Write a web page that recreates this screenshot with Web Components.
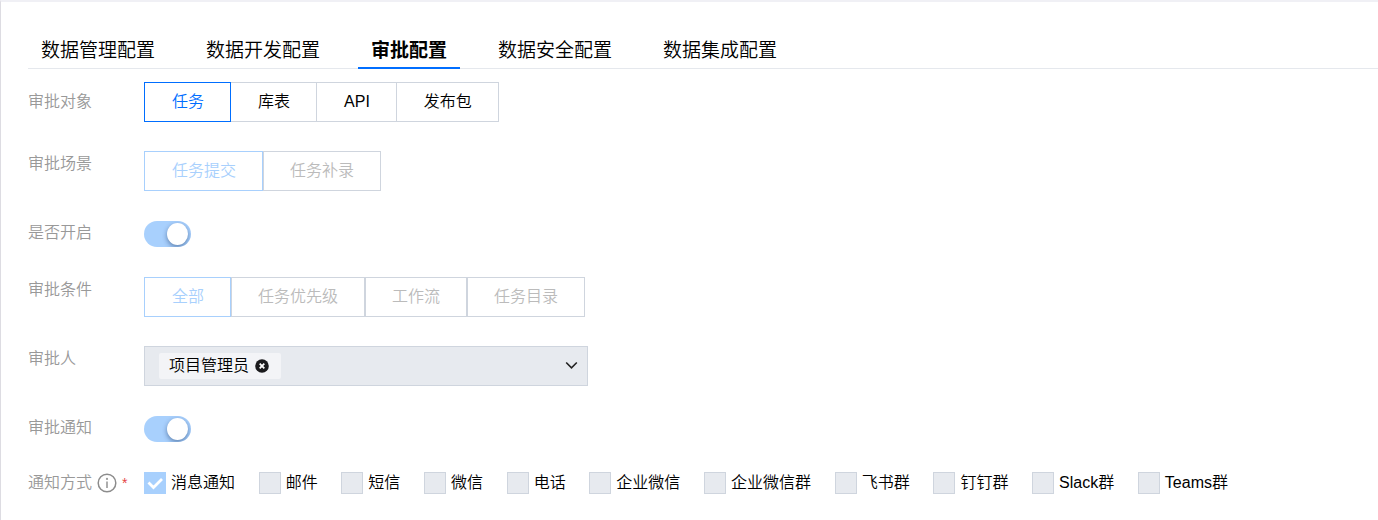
<!DOCTYPE html>
<html lang="zh-CN">
<head>
<meta charset="utf-8">
<meta name="viewport" content="width=device-width, initial-scale=1">
<title>审批配置</title>
<style>
  :root {
    --blue: #006eff;
    --blue-off: #a8d0fd;
    --line: #cfd5de;
    --fill-off: #e7eaef;
    --text-off: #bbb;
    --label: #999;
  }
  body {
    margin: 0;
    background: #fff;
    color: #000;
    font: 16px/24px "Liberation Sans", "Noto Sans CJK SC", sans-serif;
    font-weight: 350;
  }
</style>
</head>
<body>
<config-page></config-page>

<script>
const define = (name, html, setup, statics = {}) => {
  const template = document.createElement('template');
  template.innerHTML = html;
  const cls = class extends HTMLElement {
    constructor() {
      super();
      this.attachShadow({ mode: 'open', delegatesFocus: !!statics.formAssociated });
      this.shadowRoot.append(template.content.cloneNode(true));
    }
    connectedCallback() {
      if (setup) setup(this, this.shadowRoot);
    }
  };
  Object.assign(cls, statics);
  customElements.define(name, cls);
};

define('config-tab', `
  <style>
    :host { display: block; }
    button {
      display: block; margin: 0; padding: 0 13px; border: 0; background: none;
      border-bottom: 2px solid transparent;
      font: inherit; font-size: 19px; line-height: 32px; color: #000; cursor: pointer;
      white-space: nowrap;
    }
    :host([active]) button { font-weight: 700; border-color: var(--blue); }
  </style>
  <button type="button" role="tab"><slot></slot></button>`,
  (el, root) => root.querySelector('button').setAttribute('aria-selected', el.hasAttribute('active')));

define('tab-bar', `
  <style>
    :host { display: block; box-shadow: inset 0 -1px #e5e8ed; }
    nav { display: flex; gap: 25px; }
  </style>
  <nav role="tablist"><slot></slot></nav>`);

define('form-row', `
  <style>
    :host { display: flex; align-items: flex-start; }
    .label {
      flex: 0 0 116px; display: flex; align-items: center;
      color: var(--label); line-height: 26px;
    }
    :host([middle]) { align-items: center; }
    :host([middle]) .label { line-height: 22px; }
    .control { flex: 1; min-width: 0; }
  </style>
  <div class="label"><slot name="label"></slot></div>
  <div class="control"><slot></slot></div>`);

define('segment-group', `
  <style>
    :host { display: flex; }
  </style>
  <slot></slot>`, el => el.setAttribute('role', 'group'));

define('segment-item', `
  <style>
    :host { display: block; margin-left: -1px; }
    :host(:first-child) { margin-left: 0; }
    :host([active]) { z-index: 1; position: relative; }
    button {
      display: block; box-sizing: border-box; height: 40px; margin: 0;
      padding: 0 26px 0 27px; border: 1px solid var(--line); background: #fff;
      font: inherit; line-height: 38px; color: #000; white-space: nowrap;
    }
    :host([active]) button { border-color: var(--blue); color: var(--blue); }
    :host([disabled]) { margin-left: 0; }
    :host([disabled]) button { padding-left: 26px; color: var(--text-off); }
    :host([disabled]:first-child) button { padding-left: 27px; }
    :host([disabled][active]) button { border-color: var(--blue-off); color: var(--blue-off); }
  </style>
  <button type="button"><slot></slot></button>`,
  (el, root) => {
    const b = root.querySelector('button');
    b.disabled = el.hasAttribute('disabled');
    b.setAttribute('aria-pressed', el.hasAttribute('active'));
  });

define('toggle-switch', `
  <style>
    :host { display: flex; align-items: center; height: 28px; }
    input {
      appearance: none; margin: 0; width: 47px; height: 26px; border-radius: 13px;
      background: var(--blue-off); display: flex; align-items: center;
      justify-content: flex-end; padding: 0 3px; box-sizing: border-box; overflow: hidden;
    }
    input::before {
      content: ""; width: 21px; height: 22px; border-radius: 50%; background: #fff;
      box-shadow: 0 2px 5px rgba(0, 30, 80, .45);
    }
  </style>
  <input type="checkbox" role="switch" checked disabled>`,
  (el, root) => root.querySelector('input').setAttribute('aria-label', el.getAttribute('label')),
  { formAssociated: true });

define('tag-select', `
  <style>
    :host {
      display: flex; align-items: center; box-sizing: border-box; position: relative;
      max-width: 444px; height: 40px; padding: 0 0 0 14px;
      border: 1px solid var(--line); background: var(--fill-off);
    }
    .tag {
      display: flex; align-items: center; gap: 6px; height: 26px; padding: 0 12px 0 10px;
      border-radius: 2px; background: #f3f4f7; white-space: nowrap;
    }
    .tag button { display: flex; margin: 0; padding: 0; border: 0; background: none; }
    select {
      appearance: none; flex: 1; min-width: 0; height: 38px; border: 0; margin: 0;
      background: none; opacity: 1;
    }
    .arrow { position: absolute; right: 9px; top: 12px; pointer-events: none; }
  </style>
  <span class="tag"><slot></slot>
    <button type="button" aria-label="移除" disabled>
      <svg width="14" height="14" viewBox="0 0 14 14"><circle cx="7" cy="7" r="6.800" fill="#1b1b1d"/><path d="M4.700 4.700l4.600 4.600M9.300 4.700L4.700 9.300" stroke="#fff" stroke-width="1.800"/></svg>
    </button>
  </span>
  <select disabled><option value=""></option></select>
  <svg class="arrow" width="14" height="14" viewBox="0 0 14 14"><path d="M2.200 3.500L7.500 8.800 12.800 3.500" fill="none" stroke="#222" stroke-width="1.600"/></svg>`,
  (el, root) => root.querySelector('select').setAttribute('aria-label', el.getAttribute('label')),
  { formAssociated: true });

define('check-option', `
  <style>
    :host { display: block; }
    label { display: flex; align-items: center; gap: 5px; line-height: 22px; white-space: nowrap; }
    .box { display: grid; }
    .box > * { grid-area: 1 / 1; }
    input {
      appearance: none; margin: 0; width: 22px; height: 22px; box-sizing: border-box;
      border: 1px solid var(--line); background: var(--fill-off);
    }
    input:checked { background: var(--blue-off); border-color: var(--blue-off); }
    svg { display: none; pointer-events: none; }
    input:checked + svg { display: block; }
  </style>
  <label>
    <span class="box"><input type="checkbox" disabled><svg width="22" height="22" viewBox="0 0 22 22"><path d="M4.500 10.500l5 5 8.500-8.500" fill="none" stroke="#fff" stroke-width="2.800"/></svg></span>
    <span><slot></slot></span>
  </label>`,
  (el, root) => { root.querySelector('input').checked = el.hasAttribute('checked'); });

define('check-list', `
  <style>
    :host { display: flex; flex-wrap: wrap; justify-content: space-between; gap: 8px 20px; max-width: 1084px; }
  </style>
  <slot></slot>`);

define('info-mark', `
  <style>
    :host { display: flex; margin-left: 5px; }
  </style>
  <svg width="20" height="20" viewBox="0 0 20 20" role="img" aria-label="说明"><circle cx="10" cy="10" r="8.800" fill="none" stroke="#8c8c8c" stroke-width="1.500"/><path d="M10 8.500v6.500" stroke="#999" stroke-width="1.600"/><circle cx="10" cy="5.900" r="1.100" fill="#999"/></svg>`);

define('config-page', `
  <style>
    :host {
      display: block; box-sizing: border-box; min-height: 100vh; padding: 33px 0 26px 27px;
      border-top: 2px solid #f0f0f5; border-left: 1px solid #dddce2;
    }
    form { display: flex; flex-direction: column; gap: 29px; margin-top: 13px; padding-right: 28px; }
    .star { margin-left: 5px; color: #e54545; font-size: 14px; }
  </style>
  <tab-bar>
    <config-tab>数据管理配置</config-tab>
    <config-tab>数据开发配置</config-tab>
    <config-tab active>审批配置</config-tab>
    <config-tab>数据安全配置</config-tab>
    <config-tab>数据集成配置</config-tab>
  </tab-bar>
  <form>
    <form-row middle>
      <span slot="label">审批对象</span>
      <segment-group aria-label="审批对象">
        <segment-item active>任务</segment-item>
        <segment-item>库表</segment-item>
        <segment-item>API</segment-item>
        <segment-item>发布包</segment-item>
      </segment-group>
    </form-row>
    <form-row>
      <span slot="label">审批场景</span>
      <segment-group aria-label="审批场景">
        <segment-item active disabled>任务提交</segment-item>
        <segment-item disabled>任务补录</segment-item>
      </segment-group>
    </form-row>
    <form-row>
      <label slot="label" for="enabled">是否开启</label>
      <toggle-switch id="enabled" label="是否开启"></toggle-switch>
    </form-row>
    <form-row>
      <span slot="label">审批条件</span>
      <segment-group aria-label="审批条件">
        <segment-item active disabled>全部</segment-item>
        <segment-item disabled>任务优先级</segment-item>
        <segment-item disabled>工作流</segment-item>
        <segment-item disabled>任务目录</segment-item>
      </segment-group>
    </form-row>
    <form-row>
      <label slot="label" for="approver">审批人</label>
      <tag-select id="approver" label="审批人">项目管理员</tag-select>
    </form-row>
    <form-row>
      <label slot="label" for="notify">审批通知</label>
      <toggle-switch id="notify" label="审批通知"></toggle-switch>
    </form-row>
    <form-row middle>
      <span slot="label">通知方式</span>
      <info-mark slot="label"></info-mark>
      <span slot="label" class="star">*</span>
      <check-list role="group" aria-label="通知方式">
        <check-option checked>消息通知</check-option>
        <check-option>邮件</check-option>
        <check-option>短信</check-option>
        <check-option>微信</check-option>
        <check-option>电话</check-option>
        <check-option>企业微信</check-option>
        <check-option>企业微信群</check-option>
        <check-option>飞书群</check-option>
        <check-option>钉钉群</check-option>
        <check-option>Slack群</check-option>
        <check-option>Teams群</check-option>
      </check-list>
    </form-row>
  </form>`);
</script>
</body>
</html>
